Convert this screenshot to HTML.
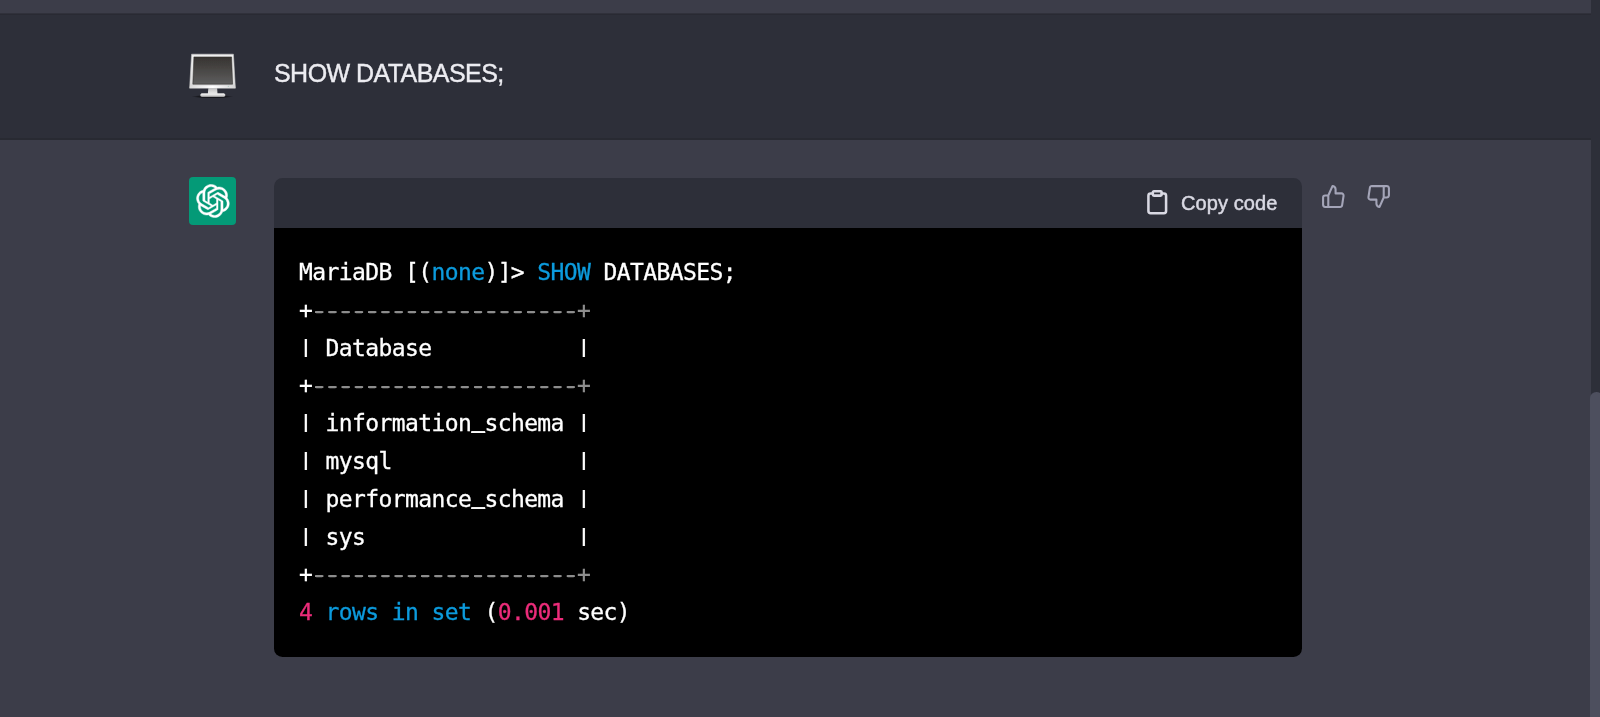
<!DOCTYPE html>
<html lang="en">
<head>
<meta charset="utf-8">
<title>ChatGPT</title>
<style>
  html, body { margin: 0; padding: 0; }
  body {
    width: 1600px; height: 717px; overflow: hidden; position: relative;
    background: #3c3d49;
    font-family: "Liberation Sans", sans-serif;
    color: #e6e6ec;
  }
  .abs { position: absolute; }
  #topstrip { left: 0; top: 0; width: 1591px; height: 13px; background: #3c3d49; }
  #userrow { left: 0; top: 14px; width: 1600px; height: 125px; background: #2d2f39; }
  #userrow-border { left: 0; top: 138px; width: 1591px; height: 2px; background: #282a32; }
  #topborder { left: 0; top: 13px; width: 1591px; height: 2px; background: linear-gradient(#30313b 0, #30313b 50%, #292a33 50%, #292a33 100%); }
  #track { left: 1591px; top: 0; width: 9px; height: 717px; background: #2d2f39; }
  #thumb { left: 1590.2px; top: 391.8px; width: 12.8px; height: 340px; background: #4d4f5e; border-radius: 6.4px; }
  #usertext { left: 273.5px; top: 57.5px; font-size: 25px; line-height: 30px; white-space: nowrap; color: #ececf1; letter-spacing: -0.55px; -webkit-text-stroke: 0.4px #ececf1; will-change: transform; }
  #monitor { left: 180px; top: 44px; width: 65px; height: 62px; }
  #avatar { left: 189px; top: 177px; width: 47px; height: 48px; background: #049a77; border-radius: 4px; }
  #avatar svg { position: absolute; left: 6.8px; top: 6.9px; width: 34px; height: 34px; color: #fff; }
  #codebox { left: 274px; top: 178px; width: 1028px; height: 478.5px; background: transparent; border-radius: 8.5px; overflow: hidden; }
  #codehead { left: 0; top: 0; width: 1028px; height: 50px; background: #2d2f39; }
  #codebody { left: 0; top: 50px; width: 1028px; height: 429px; background: #000; }
  #copy { left: 907.3px; top: 13.7px; font-size: 20px; line-height: 22px; color: #d9d9e3; white-space: nowrap; letter-spacing: 0.1px; -webkit-text-stroke: 0.5px #d9d9e3; will-change: transform; }
  #clip { left: 869.7px; top: 11.15px; width: 26.5px; height: 26.5px; color: #d9d9e3; }
  pre#code {
    margin: 0; left: 25px; top: 75.85px;
    font-family: "DejaVu Sans Mono", "Liberation Mono", monospace;
    font-size: 23px; letter-spacing: -0.606px; line-height: 37.8px; color: #fff; white-space: pre; -webkit-text-stroke: 0.3px; will-change: transform;
  }
  .k { color: #0c9bdd; }
  .n { color: #ec2c7a; }
  .c { color: #8e8e8e; }
  .p { display: inline-block; transform: translateY(-1.7px) scaleY(0.79); }
  .u { display: inline-block; transform: translateY(-3.6px); text-shadow: 0 -1.1px 0 #fff; }
  .d { text-shadow: 1.2px -0.4px 0 #8e8e8e, -1.2px -0.4px 0 #8e8e8e; }
  .thumb-ic { width: 25px; height: 25px; color: #a4a5b8; }
</style>
</head>
<body>
<div id="topstrip" class="abs"></div>
<div id="userrow" class="abs"></div>
<div id="topborder" class="abs"></div>
<div id="userrow-border" class="abs"></div>
<div id="track" class="abs"></div>
<div id="thumb" class="abs"></div>

<svg id="monitor" class="abs" viewBox="180 44 65 62">
  <defs>
    <linearGradient id="scr" x1="0" y1="0" x2="0" y2="1">
      <stop offset="0" stop-color="#363331"/>
      <stop offset="0.45" stop-color="#484644"/>
      <stop offset="1" stop-color="#5e5e5e"/>
    </linearGradient>
    <linearGradient id="bez" x1="0" y1="0" x2="0" y2="1">
      <stop offset="0" stop-color="#f0f0f0"/>
      <stop offset="0.85" stop-color="#dedede"/>
      <stop offset="1" stop-color="#cccccc"/>
    </linearGradient>
    <linearGradient id="bezb" x1="0" y1="0" x2="1" y2="0">
      <stop offset="0" stop-color="#d8d8d8"/>
      <stop offset="0.5" stop-color="#ffffff"/>
      <stop offset="1" stop-color="#d4d4d4"/>
    </linearGradient>
    <linearGradient id="neck" x1="0" y1="0" x2="0" y2="1">
      <stop offset="0" stop-color="#bdbdbd"/>
      <stop offset="1" stop-color="#ececec"/>
    </linearGradient>
    <radialGradient id="shd" cx="0.5" cy="0.5" r="0.5">
      <stop offset="0" stop-color="#000" stop-opacity="0.75"/>
      <stop offset="0.7" stop-color="#000" stop-opacity="0.45"/>
      <stop offset="1" stop-color="#000" stop-opacity="0"/>
    </radialGradient>
    <filter id="soft" x="-10%" y="-10%" width="120%" height="120%"><feGaussianBlur stdDeviation="0.35"/></filter>
  </defs>
  <ellipse cx="212.4" cy="96.6" rx="21" ry="1.8" fill="url(#shd)"/>
  <g filter="url(#soft)">
    <path d="M208.3 88 L217.1 88 L217.5 94 L207.9 94 Z" fill="url(#neck)"/>
    <rect x="200.2" y="93.4" width="25.2" height="3.4" rx="1.7" ry="1.7" fill="#cfcfcf"/>
    <rect x="201" y="93.5" width="23.6" height="1.3" rx="0.65" fill="#f0f0f0"/>
    <path d="M191.6 54.2 L233.4 54.2 L235.4 88.2 L189.6 88.2 Z" fill="url(#bez)" stroke="#c6c6c6" stroke-width="0.6" stroke-linejoin="round"/>
    <path d="M190 85.4 L235.1 85.4 L235.3 88 L189.8 88 Z" fill="url(#bezb)"/>
    <path d="M193.9 56.9 L231.6 56.9 L232.6 84.2 L192.8 84.2 Z" fill="url(#scr)" stroke="#2a2826" stroke-width="0.5"/>
    <circle cx="228.2" cy="86.3" r="0.45" fill="#6fb89a"/>
  </g>
</svg>
<div id="usertext" class="abs">SHOW DATABASES;</div>

<div id="avatar" class="abs">
<svg viewBox="0 0 41 41" fill="none"><path d="M37.5324 16.8707C37.9808 15.5241 38.1363 14.0974 37.9886 12.6859C37.8409 11.2744 37.3934 9.91076 36.676 8.68622C35.6126 6.83404 33.9882 5.3676 32.0373 4.4985C30.0864 3.62941 27.9098 3.40259 25.8215 3.85078C24.8796 2.7893 23.7219 1.94125 22.4257 1.36341C21.1295 0.785575 19.7249 0.491269 18.3058 0.500197C16.1708 0.495044 14.0893 1.16803 12.3614 2.42214C10.6335 3.67624 9.34853 5.44666 8.6917 7.47815C7.30085 7.76286 5.98686 8.3414 4.8377 9.17505C3.68854 10.0087 2.73073 11.0782 2.02839 12.312C0.956464 14.1591 0.498905 16.2988 0.721698 18.4228C0.944492 20.5467 1.83612 22.5449 3.268 24.1293C2.81966 25.4759 2.66413 26.9026 2.81182 28.3141C2.95951 29.7256 3.40701 31.0892 4.12437 32.3138C5.18791 34.1659 6.8123 35.6322 8.76321 36.5013C10.7141 37.3704 12.8907 37.5973 14.9789 37.1492C15.9208 38.2107 17.0786 39.0587 18.3747 39.6366C19.6709 40.2144 21.0755 40.5087 22.4946 40.4998C24.6307 40.5054 26.7133 39.8321 28.4418 38.5772C30.1704 37.3223 31.4556 35.5506 32.1119 33.5179C33.5027 33.2332 34.8167 32.6547 35.9659 31.821C37.115 30.9874 38.0728 29.9178 38.7752 28.684C39.8458 26.8371 40.3023 24.6979 40.0789 22.5748C39.8556 20.4517 38.9639 18.4544 37.5324 16.8707ZM22.4978 37.8849C20.7443 37.8874 19.0459 37.2733 17.6994 36.1501C17.7601 36.117 17.8666 36.0586 17.936 36.0161L25.9004 31.4156C26.1003 31.3019 26.2663 31.137 26.3813 30.9378C26.4964 30.7386 26.5563 30.5124 26.5549 30.2825V19.0542L29.9213 20.998C29.9389 21.0068 29.9541 21.0198 29.9656 21.0359C29.977 21.052 29.9842 21.0707 29.9867 21.0902V30.3889C29.9842 32.375 29.1946 34.2791 27.7909 35.6841C26.3872 37.0892 24.4838 37.8806 22.4978 37.8849ZM6.39227 31.0064C5.51397 29.4888 5.19742 27.7107 5.49804 25.9832C5.55718 26.0187 5.66048 26.0818 5.73461 26.1244L13.699 30.7248C13.8975 30.8408 14.1233 30.902 14.3532 30.902C14.583 30.902 14.8088 30.8408 15.0073 30.7248L24.731 25.1103V28.9979C24.7321 29.0177 24.7283 29.0376 24.7199 29.0556C24.7115 29.0736 24.6988 29.0893 24.6829 29.1012L16.6317 33.7497C14.9096 34.7416 12.8643 35.0097 10.9447 34.4954C9.02506 33.9811 7.38785 32.7263 6.39227 31.0064ZM4.29707 13.6194C5.17156 12.0998 6.55279 10.9364 8.19885 10.3327C8.19885 10.4013 8.19491 10.5228 8.19491 10.6071V19.808C8.19351 20.0378 8.25334 20.2638 8.36823 20.4629C8.48312 20.6619 8.64893 20.8267 8.84863 20.9404L18.5723 26.5542L15.206 28.4979C15.1894 28.5089 15.1703 28.5155 15.1505 28.5173C15.1307 28.5191 15.1107 28.516 15.0924 28.5082L7.04046 23.8557C5.32135 22.8601 4.06716 21.2235 3.55289 19.3046C3.03862 17.3858 3.30624 15.3413 4.29707 13.6194ZM31.955 20.0556L22.2312 14.4411L25.5976 12.4981C25.6142 12.4872 25.6333 12.4805 25.6531 12.4787C25.6729 12.4769 25.6928 12.4801 25.7111 12.4879L33.7631 17.1364C34.9967 17.849 36.0017 18.8982 36.6606 20.1613C37.3194 21.4244 37.6047 22.849 37.4832 24.2684C37.3617 25.6878 36.8382 27.0432 35.9743 28.1759C35.1103 29.3086 33.9415 30.1717 32.6047 30.6641C32.6047 30.5947 32.6047 30.4733 32.6047 30.3889V21.188C32.6066 20.9586 32.5474 20.7328 32.4332 20.5338C32.319 20.3348 32.154 20.1698 31.955 20.0556ZM35.3055 15.0128C35.2464 14.9765 35.1431 14.9142 35.069 14.8717L27.1045 10.2712C26.906 10.1554 26.6803 10.0943 26.4504 10.0943C26.2206 10.0943 25.9948 10.1554 25.7963 10.2712L16.0726 15.8858V11.9982C16.0715 11.9783 16.0753 11.9585 16.0837 11.9405C16.0921 11.9225 16.1048 11.9068 16.1207 11.8949L24.1719 7.25025C25.4053 6.53903 26.8158 6.19376 28.2383 6.25482C29.6608 6.31589 31.0364 6.78077 32.2044 7.59508C33.3723 8.40939 34.2842 9.53945 34.8334 10.8531C35.3826 12.1667 35.5464 13.6095 35.3055 15.0128ZM14.2424 21.9419L10.8752 19.9981C10.8576 19.9893 10.8423 19.9763 10.8309 19.9602C10.8195 19.9441 10.8122 19.9254 10.8098 19.9058V10.6071C10.8107 9.18295 11.2173 7.78848 11.9819 6.58696C12.7466 5.38544 13.8377 4.42659 15.1275 3.82264C16.4173 3.21869 17.8524 2.99464 19.2649 3.1767C20.6775 3.35876 22.0089 3.93941 23.1034 4.85067C23.0427 4.88379 22.937 4.94215 22.8668 4.98473L14.9024 9.58517C14.7025 9.69878 14.5366 9.86356 14.4215 10.0626C14.3065 10.2616 14.2466 10.4877 14.2479 10.7175L14.2424 21.9419ZM16.071 17.9991L20.4018 15.4978L24.7325 17.9975V22.9985L20.4018 25.4983L16.071 22.9985V17.9991Z" fill="currentColor" stroke="currentColor" stroke-width="0.55"/></svg>
</div>

<div id="codebox" class="abs">
  <div id="codehead" class="abs">
    <svg id="clip" class="abs" viewBox="0 0 24 24" fill="none" stroke="currentColor" stroke-width="2.3" stroke-linecap="round" stroke-linejoin="round"><path d="M16 4h2a2 2 0 0 1 2 2v14a2 2 0 0 1-2 2H6a2 2 0 0 1-2-2V6a2 2 0 0 1 2-2h2"/><rect x="8" y="2" width="8" height="4" rx="1" ry="1"/></svg>
    <div id="copy" class="abs">Copy code</div>
  </div>
<div id="codebody" class="abs"></div>
<pre id="code" class="abs">MariaDB [(<span class="k">none</span>)]&gt; <span class="k">SHOW</span> DATABASES;
+<span class="c d">--------------------</span><span class="c">+</span>
<span class="p">|</span> Database           <span class="p">|</span>
+<span class="c d">--------------------</span><span class="c">+</span>
<span class="p">|</span> information<span class="u">_</span>schema <span class="p">|</span>
<span class="p">|</span> mysql              <span class="p">|</span>
<span class="p">|</span> performance<span class="u">_</span>schema <span class="p">|</span>
<span class="p">|</span> sys                <span class="p">|</span>
+<span class="c d">--------------------</span><span class="c">+</span>
<span class="n">4</span> <span class="k">rows</span> <span class="k">in</span> <span class="k">set</span> (<span class="n">0.001</span> sec)</pre>
</div>

<svg class="abs thumb-ic" style="left:1321px;top:184px" viewBox="0 0 24 24" fill="none" stroke="currentColor" stroke-width="2" stroke-linecap="round" stroke-linejoin="round"><path d="M14 9V5a3 3 0 0 0-3-3l-4 9v11h11.28a2 2 0 0 0 2-1.7l1.38-9a2 2 0 0 0-2-2.3zM7 22H4a2 2 0 0 1-2-2v-7a2 2 0 0 1 2-2h3"/></svg>
<svg class="abs thumb-ic" style="left:1366.4px;top:183.8px" viewBox="0 0 24 24" fill="none" stroke="currentColor" stroke-width="2" stroke-linecap="round" stroke-linejoin="round"><path d="M10 15v4a3 3 0 0 0 3 3l4-9V2H5.72a2 2 0 0 0-2 1.7l-1.38 9a2 2 0 0 0 2 2.3zm7-13h2.67A2.31 2.31 0 0 1 22 4v7a2.31 2.31 0 0 1-2.33 2H17"/></svg>
</body>
</html>
